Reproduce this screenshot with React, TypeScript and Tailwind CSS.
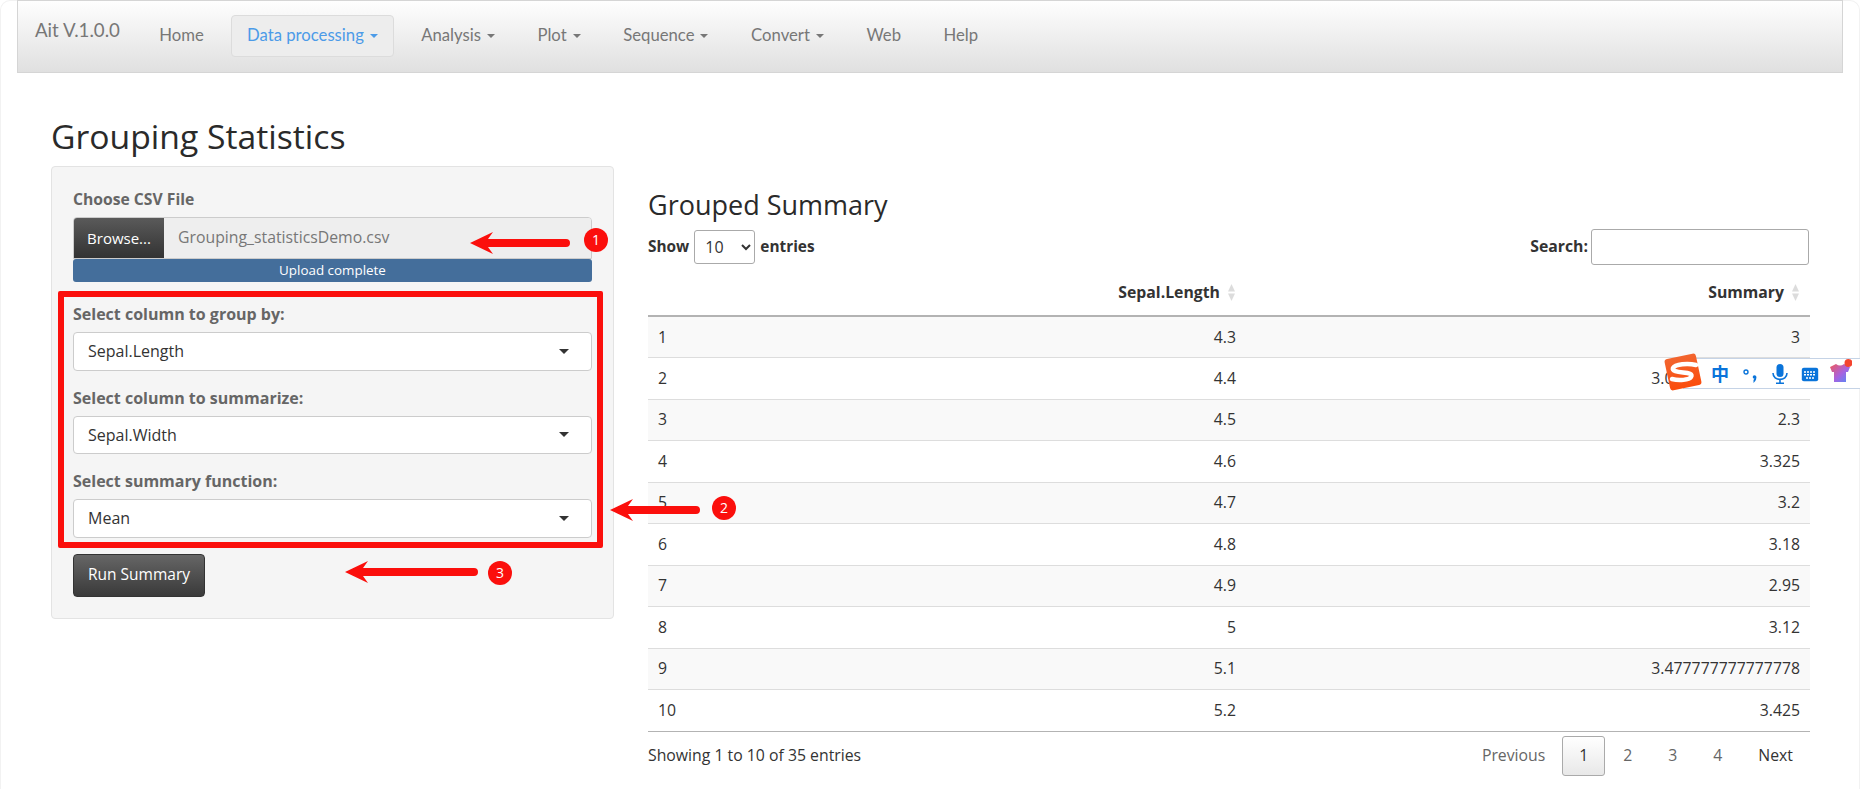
import React from "react";

const rows = [
  ["1", "4.3", "3"],
  ["2", "4.4", "3.033333333333333"],
  ["3", "4.5", "2.3"],
  ["4", "4.6", "3.325"],
  ["5", "4.7", "3.2"],
  ["6", "4.8", "3.18"],
  ["7", "4.9", "2.95"],
  ["8", "5", "3.12"],
  ["9", "5.1", "3.477777777777778"],
  ["10", "5.2", "3.425"],
];

const Caret = ({ className }: { className?: string }) => (
  <span
    className={`inline-block ml-[6px] align-middle border-x-[4px] border-t-[4px] border-x-transparent ${className}`}
  />
);

function NavItem({ label, dropdown, active }: { label: string; dropdown?: boolean; active?: boolean }) {
  return (
    <div
      className={
        active
          ? "flex items-center h-[42px] px-[15px] mx-[6px] border border-[#dcdcdc] rounded-[4px] bg-[#ededed] text-[#4c9be8]"
          : "flex items-center h-[42px] px-[21.3px] text-[#777]"
      }
    >
      {label}
      {dropdown && <Caret className={active ? "border-t-[#4c9be8]" : "border-t-[#777]"} />}
    </div>
  );
}

function SelectBox({ label, value }: { label: string; value: string }) {
  return (
    <div className="mb-[17px]">
      <div className="font-bold text-[#666] text-[16px] h-[21px] leading-[21px] mb-[7px]">{label}</div>
      <div className="relative flex items-center h-[38.5px] px-[14px] bg-white border border-[#ccc] rounded-[4px] text-[#333] text-[16px]">
        {value}
        <span className="ml-auto mr-[8px] border-x-[5px] border-t-[5px] border-x-transparent border-t-[#333]" />
      </div>
    </div>
  );
}

function SortArrows() {
  return (
    <svg width="9" height="19" viewBox="0 0 9 19" className="inline-block ml-[7px] align-[-4px]">
      <path d="M4.5 1 L8 8.5 H1 Z" fill="#dcdcdc" />
      <path d="M4.5 18 L8 10.5 H1 Z" fill="#dcdcdc" />
    </svg>
  );
}

function Arrow({ className, width }: { className: string; width: number }) {
  return (
    <svg
      width={width}
      height="24"
      viewBox={`0 0 ${width} 24`}
      className={`absolute ${className}`}
    >
      <path d={`M0 12 L23 1 L18 8 H${width - 4} a4 4 0 0 1 0 8 H18 L23 23 Z`} fill="#fb0f0c" />
    </svg>
  );
}

function Badge({ n, className }: { n: string; className: string }) {
  return (
    <div
      className={`absolute w-[24px] h-[24px] rounded-full bg-[#fb0f0c] text-white text-[14px] leading-[24px] text-center ${className}`}
    >
      {n}
    </div>
  );
}

function SogouBar() {
  return (
    <div className="absolute left-[1663px] top-[353px] w-[197px] h-[38px]">
      <div className="absolute left-[20px] right-0 top-[5px] h-[31px] bg-white border-y border-[#c5d3e6]" />
      <svg width="40" height="38" viewBox="0 0 40 38" className="absolute left-0 top-0">
        <defs>
          <linearGradient id="sg" x1="0" y1="0" x2="0" y2="1">
            <stop offset="0" stopColor="#f2652f" />
            <stop offset="1" stopColor="#fb4d0d" />
          </linearGradient>
        </defs>
        <rect x="4" y="3" width="32" height="32" rx="3" fill="url(#sg)" transform="rotate(-12 20 19)" />
        <path
          d="M33 12 C25 10 12 11 10 15 C9 18 14 19 20 19.5 C26 20 30 21 28 24 C26 27 16 28 9 26"
          fill="none"
          stroke="#fff"
          strokeWidth="4.5"
          strokeLinecap="round"
        />
      </svg>
      <span className="absolute left-[48px] top-[8px] font-['Noto_Sans_CJK_SC',sans-serif] font-bold text-[18px] leading-[24px] text-[#0a74da]">
        中
      </span>
      <svg width="16" height="18" viewBox="0 0 16 18" className="absolute left-[80px] top-[15px]">
        <circle cx="3" cy="4" r="2" fill="none" stroke="#0a74da" strokeWidth="1.4" />
        <path d="M13 8 C14 10 13 13 10.5 15 L10.5 12 Z" fill="#0a74da" />
        <circle cx="11.5" cy="9" r="1.8" fill="#0a74da" />
      </svg>
      <svg width="16" height="20" viewBox="0 0 16 20" className="absolute left-[109px] top-[11px]">
        <rect x="4.5" y="0" width="7" height="13" rx="3.5" fill="#0a74da" />
        <path d="M1 9 C1 17.5 15 17.5 15 9 M8 15 V19 M4 19.2 H12" fill="none" stroke="#0a74da" strokeWidth="1.6" />
      </svg>
      <svg width="18" height="15" viewBox="0 0 18 15" className="absolute left-[138px] top-[14px]">
        <rect x="0.8" y="0.8" width="16.4" height="13.4" rx="2" fill="#0a74da" />
        <path d="M3 5 H15 M3 7.7 H15 M5 11 H13" stroke="#fff" strokeWidth="1.4" strokeDasharray="2 1" />
      </svg>
      <svg width="22" height="26" viewBox="0 0 22 26" className="absolute left-[167px] top-[5px]">
        <defs>
          <linearGradient id="sh" x1="0" y1="0" x2="1" y2="1">
            <stop offset="0" stopColor="#f0595a" />
            <stop offset="0.55" stopColor="#a862e0" />
            <stop offset="1" stopColor="#4f8cf7" />
          </linearGradient>
        </defs>
        <path d="M0 9 L6 6 Q10 9 14 6 L20 9 L18 14 H16 V24 H4 V14 H2 Z" fill="url(#sh)" />
        <circle cx="18.5" cy="5" r="4" fill="#f4442e" />
      </svg>
    </div>
  );
}

export default function App() {
  return (
    <div className="relative w-[1860px] h-[789px] overflow-hidden bg-white font-['Open_Sans',sans-serif] text-[15.8px] text-[#333]">
      {/* faint window corners behind the navbar */}
      <div className="absolute inset-0 border-x border-t border-[#f2f2f2] rounded-t-[10px]" />
      <nav className="relative ml-[17px] w-[1826px] h-[73px] flex items-start pt-[14px] border border-[#d5d5d5] bg-gradient-to-b from-[#fefefe] to-[#e0e0e0] font-['Lato',sans-serif] text-[16.7px]">
        <div className="text-[#777] text-[18.7px] pl-[17px] pr-[18px] leading-[30px]">Ait V.1.0.0</div>
        <NavItem label="Home" />
        <NavItem label="Data processing" dropdown active />
        <NavItem label="Analysis" dropdown />
        <NavItem label="Plot" dropdown />
        <NavItem label="Sequence" dropdown />
        <NavItem label="Convert" dropdown />
        <NavItem label="Web" />
        <NavItem label="Help" />
      </nav>

      <div className="relative pl-[51px] w-[1810px]">
        <h1 className="text-[33.7px] leading-[40px] mt-[43px] mb-[10px] text-[#2a2a2a]">Grouping Statistics</h1>
        <div className="flex items-start">
          <div className="w-[563px] h-[453px] shrink-0 bg-[#f5f5f5] border border-[#e3e3e3] rounded-[4px] px-[21px] pt-[22px]">
            <div className="font-bold text-[#666] text-[15.7px] h-[21px] leading-[21px] mb-[7px]">Choose CSV File</div>
            <div className="flex h-[42px] rounded-t-[4px] overflow-hidden border border-[#ccc]">
              <div className="w-[90px] flex items-center justify-center text-white text-[15px] bg-gradient-to-b from-[#5a5a5a] to-[#333]">
                Browse...
              </div>
              <div className="flex-1 flex items-center pl-[14px] bg-[#eee] text-[#777] text-[15.8px]">
                Grouping_statisticsDemo.csv
              </div>
            </div>
            <div className="h-[23px] rounded-[3px] bg-[#446e9b] text-white text-[13.4px] leading-[23px] text-center mb-[22px]">
              Upload complete
            </div>
            <SelectBox label="Select column to group by:" value="Sepal.Length" />
            <SelectBox label="Select column to summarize:" value="Sepal.Width" />
            <SelectBox label="Select summary function:" value="Mean" />
            <div className="w-[132px] h-[43px] -mt-[1px] flex items-center justify-center rounded-[4px] border border-[#333] bg-gradient-to-b from-[#666] to-[#3a3a3a] text-white text-[15.5px]">
              Run Summary
            </div>
          </div>

          <div className="flex-1 pl-[34px]">
            <h3 className="text-[27px] leading-[32px] mt-[23px] mb-[8px] text-[#2a2a2a]">Grouped Summary</h3>
            <div className="flex items-center justify-between h-[36px] font-bold">
              <div className="flex items-center text-[15.4px]">
                Show
                <select
                  defaultValue="10"
                  className="mx-[5px] w-[61px] h-[34px] bg-white border border-[#aaa] rounded-[3px] pl-[6px] font-normal text-[16px]"
                >
                  <option>10</option>
                </select>
                entries
              </div>
              <div className="flex items-center mr-[1px]">
                Search:
                <div className="ml-[3px] w-[218px] h-[36px] bg-white border border-[#aaa] rounded-[3px]" />
              </div>
            </div>
            <table className="w-full table-fixed border-collapse mt-[4px]">
              <colgroup>
                <col className="w-[300px]" />
                <col className="w-[298px]" />
                <col />
              </colgroup>
              <thead>
                <tr className="h-[47px] border-b-[2px] border-[#b3b3b3] font-bold">
                  <th />
                  <th className="text-right pr-[10px] pt-[2px]">
                    Sepal.Length
                    <SortArrows />
                  </th>
                  <th className="text-right pr-[10px] pt-[2px]">
                    Summary
                    <SortArrows />
                  </th>
                </tr>
              </thead>
              <tbody>
                {rows.map((r, i) => (
                  <tr
                    key={r[0]}
                    className={`h-[41.5px] border-b ${i === 9 ? "border-[#b3b3b3]" : "border-[#ddd]"} ${
                      i % 2 === 0 ? "bg-[#f9f9f9]" : "bg-white"
                    }`}
                  >
                    <td className="pl-[10px] pt-[1px]">{r[0]}</td>
                    <td className="text-right pr-[10px] pt-[1px]">{r[1]}</td>
                    <td className="text-right pr-[10px] pt-[1px]">{r[2]}</td>
                  </tr>
                ))}
              </tbody>
            </table>
            <div className="flex items-center justify-between mt-[4px]">
              <div>Showing 1 to 10 of 35 entries</div>
              <div className="flex items-center text-[#666]">
                <span className="pr-[17px]">Previous</span>
                <span className="w-[43px] h-[40px] flex items-center justify-center border border-[#aaa] rounded-[3px] bg-gradient-to-b from-white to-[#e8e8e8] text-[#333]">
                  1
                </span>
                <span className="w-[45px] text-center">2</span>
                <span className="w-[45px] text-center">3</span>
                <span className="w-[45px] text-center">4</span>
                <span className="pl-[18px] pr-[17px] text-[#333]">Next</span>
              </div>
            </div>
          </div>
        </div>
      </div>

      {/* annotations drawn over the page */}
      <div className="absolute left-[58px] top-[291px] w-[545px] h-[257px] border-[6px] border-[#fb0f0c] rounded-[2px]" />
      <Arrow className="left-[470px] top-[231px]" width={100} />
      <Badge n="1" className="left-[584px] top-[228px]" />
      <Arrow className="left-[610px] top-[498px]" width={90} />
      <Badge n="2" className="left-[712px] top-[496px]" />
      <Arrow className="left-[345px] top-[560px]" width={133} />
      <Badge n="3" className="left-[488px] top-[561px]" />
      <SogouBar />
    </div>
  );
}
